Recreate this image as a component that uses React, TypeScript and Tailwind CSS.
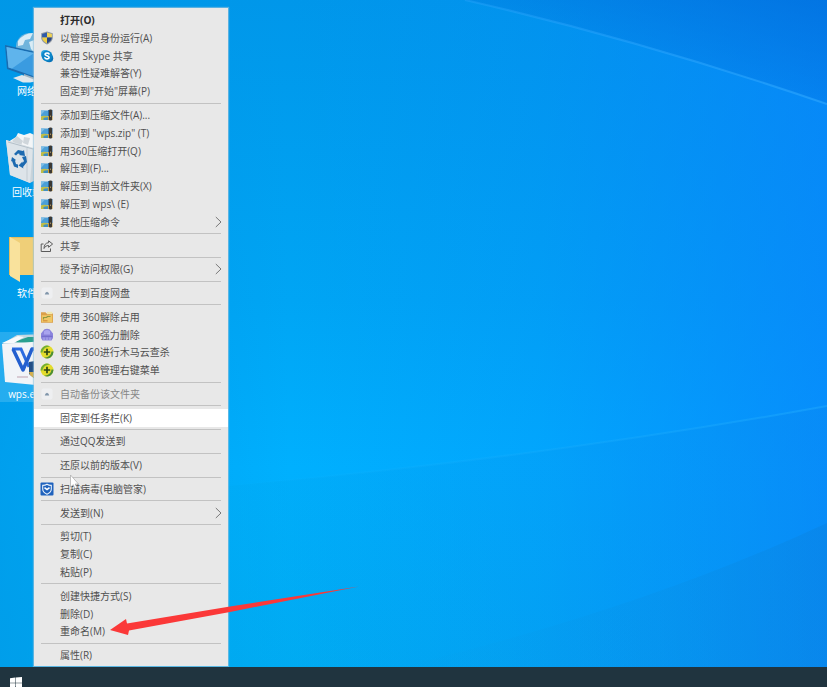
import type { ReactNode } from "react";

type Item = {
  label: string;
  icon?: ReactNode;
  submenu?: boolean;
  bold?: boolean;
  muted?: boolean;
  active?: boolean;
};

function ShieldIcon() {
  return (
    <svg viewBox="0 0 14 14" className="size-3.5" aria-hidden="true">
      <path d="M7 .6 12.800 2.200v4.300c0 3.200-2.600 5.600-5.800 7C3.800 12.100 1.200 9.700 1.200 6.500V2.200Z" fill="#8f98a3" />
      <path d="M7 1.600V6.600H2.100V2.900Z" fill="#2f5aa8" />
      <path d="M7 1.600V6.600h4.900V2.900Z" fill="#efd254" />
      <path d="M2.100 6.600H7v5.900C4.500 11.300 2.300 9.300 2.100 6.600Z" fill="#efcf45" />
      <path d="M11.900 6.600H7v5.900c2.500-1.200 4.700-3.200 4.900-5.900Z" fill="#2c4680" />
    </svg>
  );
}

function SkypeIcon() {
  return (
    <svg viewBox="0 0 14 14" className="size-3.5" aria-hidden="true">
      <circle cx="5" cy="5" r="4" fill="#2aa5e0" />
      <circle cx="9.200" cy="9.200" r="4" fill="#0873b8" />
      <circle cx="7" cy="7" r="5.400" fill="#0d86c8" />
      <path d="M9 4.900C8.500 3.700 5.100 3.500 5 5.300c0 1.900 4.100 1.200 4.100 3.200 0 1.800-3.600 1.800-4.200.3" fill="none" stroke="#fff" strokeWidth="1.600" strokeLinecap="round" />
    </svg>
  );
}

function ArchiveIcon() {
  return (
    <svg viewBox="0 0 14 14" className="size-3.5" aria-hidden="true">
      <path d="M1 2.500h7v6H1Z" fill="#4b9fd8" />
      <path d="M1 2.500h4L1 7Z" fill="#7dbde6" />
      <path d="M1 8.500q3-1.500 7 0v3.500H1Z" fill="#c0bd45" />
      <path d="M3.500 10q2-1 4.500-.8V12H3.500Z" fill="#3f8fc2" />
      <path d="M8 2h4.500v6H8Z" fill="#2f6aa0" />
      <path d="M8 8h4.500v4H8Z" fill="#c79a35" />
      <rect x="9" y="1.600" width="3" height="10.800" rx="1" fill="#3b3833" />
      <path d="M10 7.500h1v1.500h-1z" fill="#9b8d68" />
    </svg>
  );
}

function ShareIcon() {
  return (
    <svg viewBox="0 0 14 14" className="size-3.5" fill="none" stroke="#5a5a5a" strokeWidth="1" strokeLinejoin="round" aria-hidden="true">
      <path d="M3.500 5H1.200v7.500h9.300V9.500" />
      <path d="M8.600 1.800 12.600 5 8.600 8.300V6.500C6.500 6.500 5 7.500 4 9.500 4 6 5.600 3.800 8.600 3.700Z" />
    </svg>
  );
}

function CloudIcon() {
  return (
    <svg viewBox="0 0 14 14" className="size-3.5" aria-hidden="true">
      <rect x="1.500" y="1.500" width="11" height="11" rx="2" fill="#eeeff1" />
      <path d="M4.800 8.600 5.500 6.800 7 5.800l1.500 1 .7 1.800Z" fill="#7f95aa" />
    </svg>
  );
}

function FolderUnlockIcon() {
  return (
    <svg viewBox="0 0 14 14" className="size-3.5" aria-hidden="true">
      <path d="M1 2.200h4.500l1 1.300H13v9.300H1Z" fill="#dba04a" />
      <path d="M1.800 5.200h10.400v6.800H1.800Z" fill="#f0c765" />
      <path d="M7 1.800h5.200v2.400H7Z" fill="#f1e8ae" />
      <path d="M3.500 9.500V7.500h3l1-1h3" fill="none" stroke="#8f9a42" strokeWidth="1.200" />
      <path d="M3 10.800h4.500" stroke="#cf8634" />
    </svg>
  );
}

function ShredIcon() {
  return (
    <svg viewBox="0 0 14 14" className="size-3.5" aria-hidden="true">
      <path d="M3 3Q4 .8 7 .8T11 3l2 2.500V10l-1.500 2.500h-9L1 10V5.500Z" fill="#8b84dd" />
      <path d="M4 3.200Q7 .8 10 3.200V6.500H4Z" fill="#a9a4ee" />
      <path d="M1.500 8.300h11" stroke="#716ac9" />
      <path d="M4 12V9.500M7 12V9.500M10 12V9.500" stroke="#bbb7f3" strokeWidth=".8" />
    </svg>
  );
}

function Safe360Icon() {
  return (
    <svg viewBox="0 0 14 14" className="size-3.5" aria-hidden="true">
      <circle cx="7" cy="7" r="6.400" fill="#e3dc2c" />
      <path d="M.6 7.500A6.400 6.400 0 0 1 10 1.400C6 1.500 3 3.500 2.500 7.500Z" fill="#6fae35" />
      <path d="M13.400 6.500A6.400 6.400 0 0 1 4 12.700c4 0 7-2.200 7.500-6.200Z" fill="#4c8f35" />
      <path d="M7 3.800v6.400M3.800 7h6.400" stroke="#2c4716" strokeWidth="1.700" />
    </svg>
  );
}

function GuardIcon() {
  return (
    <svg viewBox="0 0 14 14" className="size-3.5" aria-hidden="true">
      <rect x=".5" y=".5" width="13" height="13" rx="1" fill="#1f62bd" />
      <path d="M7 2.200Q9 3.500 11.300 3.400V7c0 2.500-2 4.200-4.300 5.200C4.700 11.200 2.700 9.500 2.700 7V3.400Q5 3.500 7 2.200Z" fill="none" stroke="#e8f1fb" strokeWidth="1.100" />
      <path d="M4.500 5.600 7 7.600l2.500-2" fill="none" stroke="#fff" strokeWidth="1.600" />
    </svg>
  );
}

const groups: Item[][] = [
  [
    { label: "打开(O)", bold: true },
    { label: "以管理员身份运行(A)", icon: <ShieldIcon /> },
    { label: "使用 Skype 共享", icon: <SkypeIcon /> },
    { label: "兼容性疑难解答(Y)" },
    { label: "固定到\"开始\"屏幕(P)" },
  ],
  [
    { label: "添加到压缩文件(A)...", icon: <ArchiveIcon /> },
    { label: "添加到 \"wps.zip\" (T)", icon: <ArchiveIcon /> },
    { label: "用360压缩打开(Q)", icon: <ArchiveIcon /> },
    { label: "解压到(F)...", icon: <ArchiveIcon /> },
    { label: "解压到当前文件夹(X)", icon: <ArchiveIcon /> },
    { label: "解压到 wps\\ (E)", icon: <ArchiveIcon /> },
    { label: "其他压缩命令", icon: <ArchiveIcon />, submenu: true },
  ],
  [{ label: "共享", icon: <ShareIcon /> }],
  [{ label: "授予访问权限(G)", submenu: true }],
  [{ label: "上传到百度网盘", icon: <CloudIcon /> }],
  [
    { label: "使用 360解除占用", icon: <FolderUnlockIcon /> },
    { label: "使用 360强力删除", icon: <ShredIcon /> },
    { label: "使用 360进行木马云查杀", icon: <Safe360Icon /> },
    { label: "使用 360管理右键菜单", icon: <Safe360Icon /> },
  ],
  [{ label: "自动备份该文件夹", icon: <CloudIcon />, muted: true }],
  [{ label: "固定到任务栏(K)", active: true }],
  [{ label: "通过QQ发送到" }],
  [{ label: "还原以前的版本(V)" }],
  [{ label: "扫描病毒(电脑管家)", icon: <GuardIcon /> }],
  [{ label: "发送到(N)", submenu: true }],
  [{ label: "剪切(T)" }, { label: "复制(C)" }, { label: "粘贴(P)" }],
  [{ label: "创建快捷方式(S)" }, { label: "删除(D)" }, { label: "重命名(M)" }],
  [{ label: "属性(R)" }],
];

function MenuRow({ item }: { item: Item }) {
  const tone = item.muted ? "text-[#858585]" : item.bold ? "font-bold text-[#2b2b2b]" : "text-[#505050]";
  return (
    <button
      type="button"
      role="menuitem"
      className={`flex min-h-0 w-full flex-[18_1_0] items-center gap-1.5 pr-1.5 pl-1.5 text-left text-[10px] leading-4 whitespace-nowrap ${tone} ${item.active ? "bg-white" : ""}`}
    >
      <span className="flex size-3.5 shrink-0 items-center justify-center">{item.icon}</span>
      <span className="flex-1">{item.label}</span>
      {item.submenu && (
        <svg viewBox="0 0 7 12" className="h-3 w-[7px]" fill="none" stroke="#777" strokeWidth="1" aria-hidden="true">
          <path d="M.8 1 6 6 .8 11" />
        </svg>
      )}
    </button>
  );
}

function ContextMenu() {
  return (
    <div
      role="menu"
      className="absolute top-2 bottom-px left-[34px] flex w-[194px] flex-col bg-[#e8e8e8] pt-[3px] pb-0.5 shadow-[0_0_1px_1px_rgba(150,195,220,0.6)]"
    >
      {groups.flatMap((group, g) => [
        g > 0 ? (
          <div key={`s${g}`} role="separator" className="flex min-h-0 flex-[6_1_0] items-center px-[7px]">
            <span className="h-px w-full bg-[#c2c2c2]" />
          </div>
        ) : null,
        ...group.map((item) => <MenuRow key={item.label} item={item} />),
      ])}
    </div>
  );
}

function NetworkArt() {
  return (
    <svg viewBox="0 0 54 54" className="h-[54px] w-[54px]" aria-hidden="true">
      <circle cx="30" cy="18" r="14" fill="#6fb4dc" />
      <path d="M18 12q6-8 15-8l-3 6-5 1-2 5-5 1zM29 13l8-3 5 7-6 8-5-5z" fill="#d9ecf6" />
      <path d="M5 16 50 26v29L7 40Z" fill="#1a6cb0" />
      <path d="M6.500 18 49 27.500v25L8.500 38.500Z" fill="#3a9be0" />
      <path d="M6.500 18 34 24 12 39.500l-3.500-1Z" fill="#5fb4ec" />
      <path d="M24 45v5l11 3v-4Z" fill="#9fb4c2" />
      <path d="m13 49 9-3 16 6-8 1.500h-7Z" fill="#dfe7ec" />
    </svg>
  );
}

function RecycleArt() {
  return (
    <svg viewBox="0 0 54 54" className="h-[54px] w-[54px]" aria-hidden="true">
      <path d="M8 12 16 7l2-4 6 2 6-2 7 3 8 6-4 8H9Z" fill="#f3f6f8" />
      <path d="M12 11l5-5 6 5-3 6zM24 7l6 1-2 7-5-2z" fill="#cfd6db" />
      <path d="M6 10 33 18 47 10 43 46 30 53 10 45Z" fill="#c9d3da" />
      <path d="M6 10 33 18 30 53 10 45Z" fill="#dde4e9" />
      <path d="M8 12 33 19" stroke="#b4c0c9" />
      <path d="M27 18v33" stroke="#c3ccd3" />
      <g fill="#1c6ab0">
        <path d="m14 24 4-4 5 1 1-1 1 6-6-1 1-1-2-.5-2 2Z" />
        <path d="m22 27 4-1 1 6-4 5 .5 1.500-5-3 4-4v1.500l1.500-2Z" />
        <path d="m12 27 4 3-1 .8 1 3.200 2 .5v3.500l-4-1.500-2-5.500-1 .4Z" />
      </g>
    </svg>
  );
}

function FolderArt() {
  return (
    <svg viewBox="0 0 54 54" className="h-[54px] w-[54px]" aria-hidden="true">
      <path d="M9 6h36v38H9Z" fill="#e2bd62" />
      <path d="M12 7h33v37H19Z" fill="#efcf78" />
      <path d="M10 6 20 12v39L10 45Z" fill="#f9e29c" />
    </svg>
  );
}

function WpsArt() {
  return (
    <svg viewBox="0 0 54 54" className="h-[54px] w-[54px]" aria-hidden="true">
      <path d="M2 12 17 3 48 2 44 14Z" fill="#c3d8e2" />
      <path d="M14 10 28 5h16l-6 7Z" fill="#2aa08f" />
      <path d="m2 11 16-7 6 1-10 6Z" fill="#f7fafc" />
      <path d="M2 12 46 9v45L5 50Z" fill="#f1f4f8" />
      <path d="M12 17h9l8 18" fill="none" stroke="#2b6be0" strokeWidth="3" />
      <path d="m13 17 10 21 9-21h9" fill="none" stroke="#235fcf" strokeWidth="3.500" strokeLinejoin="round" />
      <path d="m29 30 6-1 6 2v9l-6 7-6-5Z" fill="#234f86" />
      <path d="M29 40h6v7l-5-4Z" fill="#d9b04a" />
      <path d="M17 45h11" stroke="#d8cbd4" strokeWidth="2" />
    </svg>
  );
}

const shortcuts = [
  { name: "网络", art: <NetworkArt />, selected: false },
  { name: "回收站", art: <RecycleArt />, selected: false },
  { name: "软件", art: <FolderArt />, selected: false },
  { name: "wps.exe", art: <WpsArt />, selected: true },
];

function Wallpaper() {
  return (
    <svg viewBox="0 0 827 667" preserveAspectRatio="none" className="absolute inset-0 size-full" aria-hidden="true">
      <defs>
        <linearGradient id="base" x1="0" y1="0" x2="0" y2="1">
          <stop offset="0" stopColor="#0097ea" />
          <stop offset=".45" stopColor="#00a5f4" />
          <stop offset=".7" stopColor="#00b0fe" />
          <stop offset="1" stopColor="#00adf3" />
        </linearGradient>
        <linearGradient id="right" x1="0" y1="0" x2="1" y2="0">
          <stop offset=".35" stopColor="#0a80fc" stopOpacity="0" />
          <stop offset=".65" stopColor="#0a80fc" stopOpacity=".2" />
          <stop offset="1" stopColor="#0a80fc" stopOpacity=".68" />
        </linearGradient>
        <linearGradient id="left" x1="0" y1="0" x2="1" y2="0">
          <stop offset="0" stopColor="#0098e6" stopOpacity=".7" />
          <stop offset=".35" stopColor="#0098e6" stopOpacity="0" />
        </linearGradient>
        <linearGradient id="corner" x1="0" y1="1" x2="1" y2="0">
          <stop offset=".3" stopColor="#006bd8" stopOpacity=".05" />
          <stop offset="1" stopColor="#006bd8" stopOpacity=".65" />
        </linearGradient>
        <linearGradient id="shade" x1="0" y1="0" x2="1" y2="0">
          <stop offset="0" stopColor="#00a8ee" stopOpacity=".25" />
          <stop offset="1" stopColor="#0a86ee" stopOpacity=".3" />
        </linearGradient>
        <linearGradient id="ground" x1="0" y1="0" x2="1" y2="0">
          <stop offset="0" stopColor="#0aa0e8" stopOpacity=".05" />
          <stop offset="1" stopColor="#0a80dc" stopOpacity=".4" />
        </linearGradient>
        <linearGradient id="ray" x1="0" y1="0" x2="1" y2="0">
          <stop offset="0" stopColor="#2fa8ff" stopOpacity=".35" />
          <stop offset="1" stopColor="#2fa8ff" stopOpacity=".6" />
        </linearGradient>
        <linearGradient id="horizon" x1="0" y1="0" x2="1" y2="0">
          <stop offset="0" stopColor="#25b8ff" stopOpacity="0" />
          <stop offset="1" stopColor="#25b0ff" stopOpacity=".4" />
        </linearGradient>
      </defs>
      <path d="M0 0h827v667H0Z" fill="url(#base)" />
      <path d="M0 0h827v667H0Z" fill="url(#left)" />
      <path d="M0 0h827v667H0Z" fill="url(#right)" />
      <path d="M465 0Q640 40 827 104V0Z" fill="url(#corner)" />
      <path d="M228 486 Q540 458 827 406V667H228Z" fill="url(#shade)" />
      <path d="M400 667Q640 610 827 523V667Z" fill="url(#ground)" />
      <path d="M465 0Q640 40 827 104" stroke="url(#ray)" strokeWidth="2" fill="none" />
      <path d="M228 486Q540 458 827 406" stroke="url(#horizon)" strokeWidth="2" fill="none" />
    </svg>
  );
}

export default function App() {
  return (
    <div className="flex h-screen flex-col overflow-hidden font-['Open_Sans','Noto_Sans_CJK_SC',sans-serif]">
      <main className="relative min-h-0 flex-1 overflow-hidden bg-[#00a2f0]">
        <Wallpaper />
        <nav aria-label="桌面" className="relative flex w-[54px] flex-col gap-[31px] pt-[29px]">
          {shortcuts.map((s) => (
            <button
              key={s.name}
              type="button"
              className={`flex h-[70px] w-full flex-col items-center text-[10px] leading-4 text-white ${s.selected ? "bg-[#5cc4f5]/40" : ""}`}
            >
              {s.art}
              <span>{s.name}</span>
            </button>
          ))}
        </nav>
        <ContextMenu />
        <svg viewBox="0 0 14 18" className="pointer-events-none absolute top-[474px] left-[69px] h-[18px] w-3.5" aria-hidden="true">
          <path d="M1.500 1v12l2.800-2.300 1.700 4 2-1-1.800-3.700H9.500Z" fill="#fff" stroke="#a9a9a9" strokeWidth=".7" />
        </svg>
        <svg viewBox="0 0 250 50" className="pointer-events-none absolute top-[585px] left-[110px] h-[50px] w-[250px]" aria-hidden="true">
          <path d="M0 45 16 34l1 4.500L120 21.500 249 1.500 120 27 19 45.500l-1 4.500Z" fill="#fb3838" />
        </svg>
      </main>
      <footer className="flex h-5 shrink-0 items-end overflow-hidden bg-[#20343f] pl-2.5">
        <button type="button" aria-label="开始" className="h-2.5 w-3 overflow-hidden">
          <svg viewBox="0 0 12 12" className="size-3" fill="#fff" aria-hidden="true">
            <path d="M0 1.200 5.200.6v5.100H0ZM5.700.5 12 0v5.700H5.700ZM0 6.200h5.200v4.900l-5.200-.6ZM5.700 6.200H12V12l-6.300-.8Z" />
          </svg>
        </button>
      </footer>
    </div>
  );
}
